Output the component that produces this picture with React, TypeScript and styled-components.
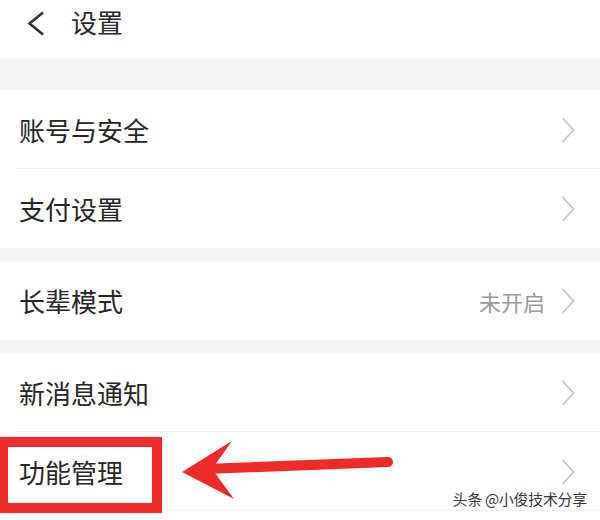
import React from "react";
import styled, { createGlobalStyle } from "styled-components";

const GlobalStyle = createGlobalStyle`
  body {
    margin: 0;
    background: #fff;
    font-family: "Noto Sans CJK SC", "Noto Sans", sans-serif;
  }
`;

const Page = styled.div`
  position: relative;
  width: 600px;
  height: 520px;
  overflow: hidden;
  background: #fff;
`;

const Header = styled.div`
  height: 58px;
  box-sizing: border-box;
  padding: 0 0 12px 27px;
  display: flex;
  align-items: center;
  gap: 26px;
`;

const Title = styled.div`
  font-size: 26px;
  color: #2a2a2a;
  line-height: 1;
  margin-top: -2px;
`;

const Gap = styled.div<{ $h: number }>`
  height: ${(p) => p.$h}px;
  background: #f3f3f3;
`;

const Row = styled.div<{ $h: number; $line?: boolean }>`
  position: relative;
  height: ${(p) => p.$h}px;
  display: flex;
  align-items: center;
  justify-content: space-between;
  padding: 0 25px 0 19px;
  &::after {
    content: "";
    display: ${(p) => (p.$line ? "block" : "none")};
    position: absolute;
    left: 15px;
    right: 0;
    bottom: 0;
    height: 1px;
    background: #efefef;
  }
`;

const Label = styled.span`
  font-size: 26px;
  color: #262626;
  line-height: 1;
`;

const Right = styled.div`
  display: flex;
  align-items: center;
  gap: 16px;
`;

const Value = styled.span`
  font-size: 22px;
  color: #9a9a9a;
  line-height: 1;
`;

const Highlight = styled.div`
  position: absolute;
  left: 0;
  top: 437px;
  width: 162px;
  height: 76px;
  box-sizing: border-box;
  border: 10px solid #ee2b2b;
  border-left-width: 8px;
`;

const Overlay = styled.svg`
  position: absolute;
  left: 0;
  top: 0;
  pointer-events: none;
`;

const Watermark = styled.div`
  position: absolute;
  right: 13px;
  bottom: 11px;
  font-size: 15px;
  color: #3a3a3a;
  letter-spacing: -0.3px;
  text-shadow: 0 0 2px #fff, 0 0 2px #fff;
`;

const Chevron = () => (
  <svg width="14" height="26" viewBox="0 0 14 26">
    <polyline points="1.5,1 12.5,13 1.5,25" fill="none" stroke="#c6c6c6" strokeWidth="1.8" />
  </svg>
);

const Back = () => (
  <svg width="18" height="25" viewBox="0 0 18 25">
    <polyline points="16,1.5 2.5,12.5 16,23.5" fill="none" stroke="#333" strokeWidth="2.6" />
  </svg>
);

const rows = [
  { gap: 32 },
  { label: "账号与安全", h: 79, line: true },
  { label: "支付设置", h: 79 },
  { gap: 14 },
  { label: "长辈模式", h: 78, value: "未开启" },
  { gap: 13 },
  { label: "新消息通知", h: 79, line: true },
  { label: "功能管理", h: 79, line: true },
];

export default function App() {
  return (
    <Page>
      <GlobalStyle />
      <Header>
        <Back />
        <Title>设置</Title>
      </Header>
      {rows.map((r, i) =>
        r.gap ? (
          <Gap key={i} $h={r.gap} />
        ) : (
          <Row key={i} $h={r.h!} $line={r.line}>
            <Label>{r.label}</Label>
            <Right>
              {r.value && <Value>{r.value}</Value>}
              <Chevron />
            </Right>
          </Row>
        )
      )}
      <Highlight />
      <Overlay width="600" height="520" viewBox="0 0 600 520">
        <line x1="205" y1="469" x2="388" y2="462" stroke="#ee2b2b" strokeWidth="10" strokeLinecap="round" />
        <polygon points="182,472 232,441 212,469 234,499" fill="#ee2b2b" />
      </Overlay>
      <Watermark>头条 @小俊技术分享</Watermark>
    </Page>
  );
}
